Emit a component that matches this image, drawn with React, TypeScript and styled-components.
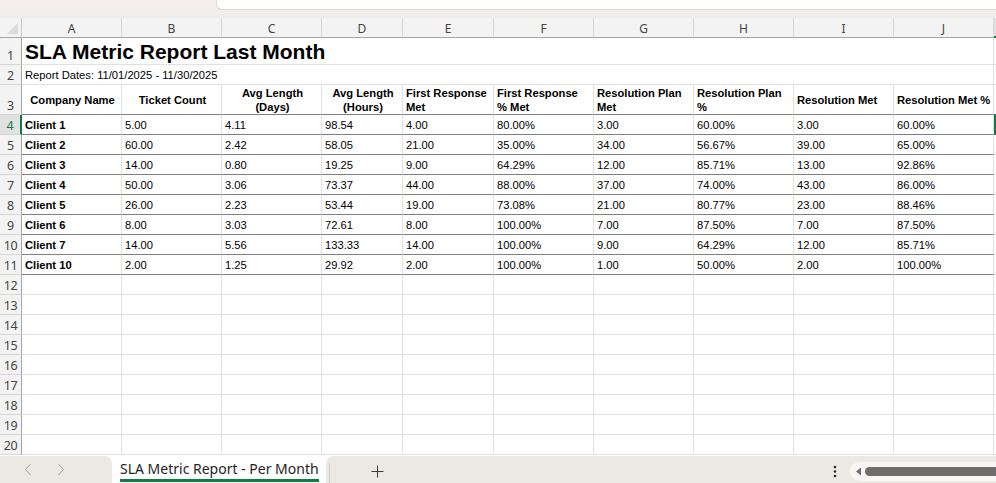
import React from "react";
import styled, { createGlobalStyle } from "styled-components";

const Global = createGlobalStyle`
  html, body { margin: 0; padding: 0; background: #ffffff; overflow: hidden; }
  body { font-family: "Liberation Sans", Arial, sans-serif; }
  * { box-sizing: border-box; }
`;

const Page = styled.div`
  width: 996px;
  height: 483px;
  display: flex;
  flex-direction: column;
  overflow: hidden;
  background: #ffffff;
`;

const TopStrip = styled.div`
  height: 18px;
  flex: none;
  display: flex;
  background: linear-gradient(#f6eeec, #efedec);
`;

const FormulaEdge = styled.div`
  margin-left: 216px;
  flex: 1;
  height: 10px;
  background: #ffffff;
  border: 1px solid #ded9d7;
  border-top: none;
  border-right: none;
  border-bottom-left-radius: 6px;
`;

const Sheet = styled.div`
  flex: none;
  display: grid;
  grid-template-columns: 22px 100px 100px 100px 81px 91px 100px 100px 100px 100px 100px 1fr;
  grid-template-rows: 20px 27px 20px 30px repeat(17, 20px);
`;

const Corner = styled.div`
  background: #f3f3f3;
  border-right: 1px solid #c8c8c8;
  border-bottom: 1px solid #a6a6a6;
  position: relative;
  &::after {
    content: "";
    position: absolute;
    right: 3px;
    bottom: 3px;
    width: 0;
    height: 0;
    border-left: 11px solid transparent;
    border-bottom: 11px solid #dcdcdc;
  }
`;

const ColHead = styled.div<{ $active?: boolean }>`
  background: ${(p) => (p.$active ? "#e1e1e1" : "#f3f3f3")};
  border-right: 1px solid #d6d6d6;
  border-bottom: ${(p) => (p.$active ? "2px solid #107c41" : "1px solid #a6a6a6")};
  display: flex;
  align-items: center;
  justify-content: center;
  font-family: "Noto Sans", "Liberation Sans", sans-serif;
  font-size: 12px;
  color: #444444;
  padding-top: 1px;
`;

const RowHead = styled.div<{ $active?: boolean }>`
  background: ${(p) => (p.$active ? "#e1e1e1" : "#f3f3f3")};
  border-right: ${(p) => (p.$active ? "2px solid #107c41" : "1px solid #a6a6a6")};
  border-bottom: 1px solid #d6d6d6;
  display: flex;
  align-items: flex-end;
  justify-content: center;
  font-family: "Noto Sans", "Liberation Sans", sans-serif;
  font-size: 12.5px;
  line-height: 17px;
  letter-spacing: -0.3px;
  color: ${(p) => (p.$active ? "#107c41" : "#444444")};
`;

const Cell = styled.div<{
  $dark?: boolean;
  $bold?: boolean;
  $align?: "left" | "center";
  $span?: number;
}>`
  grid-column: ${(p) => (p.$span ? `span ${p.$span}` : "auto")};
  border-right: 1px solid #e1e1e1;
  border-bottom: 1px solid ${(p) => (p.$dark ? "#7f7f7f" : "#e1e1e1")};
  display: flex;
  align-items: center;
  justify-content: ${(p) => (p.$align === "center" ? "center" : "flex-start")};
  text-align: ${(p) => (p.$align === "center" ? "center" : "left")};
  padding: 0 1px 0 3px;
  font-size: 11.2px;
  line-height: 14px;
  font-weight: ${(p) => (p.$bold ? 700 : 400)};
  color: #000000;
  white-space: nowrap;
  overflow: hidden;
  min-width: 0;
`;

const Title = styled(Cell)`
  font-size: 21px;
  font-weight: 700;
  line-height: 24px;
  padding-top: 2px;
`;

const ActiveCell = styled.div`
  border: 2px solid #107c41;
  border-right: none;
  margin-top: -1px;
  height: 21px;
`;

const TabBar = styled.div`
  flex: 1;
  display: flex;
  background: #ffffff;
  padding-top: 1px;
`;

const NavArea = styled.div`
  width: 112px;
  background: #ece8e3;
  border-top-right-radius: 8px;
  display: flex;
  align-items: center;
  padding-left: 22px;
  gap: 21px;
`;

const NavBtn = styled.span`
  width: 12px;
  height: 14px;
  display: flex;
  align-items: center;
  justify-content: center;
`;

const Tab = styled.div`
  width: 214px;
  display: flex;
  flex-direction: column;
  align-items: flex-start;
  padding: 3px 0 0 8px;
`;

const TabLabel = styled.span`
  font-family: "Noto Sans", "Liberation Sans", sans-serif;
  font-size: 14px;
  line-height: 19px;
  color: #242424;
  padding-bottom: 1px;
  border-bottom: 3px solid #107c41;
`;

const RightArea = styled.div`
  flex: 1;
  background: #ece8e3;
  border-top-left-radius: 8px;
  display: flex;
  align-items: center;
`;

const Divider = styled.div`
  width: 1px;
  height: 20px;
  background: #d2cec9;
  margin-left: 3px;
  margin-top: 6px;
`;

const AddBtn = styled.span`
  margin-left: 41px;
  display: flex;
  align-items: center;
  margin-top: 4px;
`;

const MoreBtn = styled.span`
  margin-left: 449px;
  display: flex;
  align-items: center;
  margin-top: 4px;
`;

const Scroll = styled.div`
  margin-left: 13px;
  margin-top: 4px;
  flex: 1;
  height: 19px;
  background: #f7f6f4;
  border-radius: 10px 0 0 10px;
  display: flex;
  align-items: center;
  padding-left: 5px;
  gap: 3px;
`;

const Thumb = styled.div`
  flex: 1;
  height: 9px;
  background: #6e6e6e;
  border-radius: 5px 0 0 5px;
`;

const cols = ["A", "B", "C", "D", "E", "F", "G", "H", "I", "J"];

type Hdr = { text: React.ReactNode; align: "left" | "center" };
const headers: Hdr[] = [
  { text: "Company Name", align: "center" },
  { text: "Ticket Count", align: "center" },
  { text: <>Avg Length<br />(Days)</>, align: "center" },
  { text: <>Avg Length<br />(Hours)</>, align: "center" },
  { text: <>First Response<br />Met</>, align: "left" },
  { text: <>First Response<br />% Met</>, align: "left" },
  { text: <>Resolution Plan<br />Met</>, align: "left" },
  { text: <>Resolution Plan<br />%</>, align: "left" },
  { text: "Resolution Met", align: "left" },
  { text: "Resolution Met %", align: "left" },
];

const data: string[][] = [
  ["Client 1", "5.00", "4.11", "98.54", "4.00", "80.00%", "3.00", "60.00%", "3.00", "60.00%"],
  ["Client 2", "60.00", "2.42", "58.05", "21.00", "35.00%", "34.00", "56.67%", "39.00", "65.00%"],
  ["Client 3", "14.00", "0.80", "19.25", "9.00", "64.29%", "12.00", "85.71%", "13.00", "92.86%"],
  ["Client 4", "50.00", "3.06", "73.37", "44.00", "88.00%", "37.00", "74.00%", "43.00", "86.00%"],
  ["Client 5", "26.00", "2.23", "53.44", "19.00", "73.08%", "21.00", "80.77%", "23.00", "88.46%"],
  ["Client 6", "8.00", "3.03", "72.61", "8.00", "100.00%", "7.00", "87.50%", "7.00", "87.50%"],
  ["Client 7", "14.00", "5.56", "133.33", "14.00", "100.00%", "9.00", "64.29%", "12.00", "85.71%"],
  ["Client 10", "2.00", "1.25", "29.92", "2.00", "100.00%", "1.00", "50.00%", "2.00", "100.00%"],
];

const Chevron = ({ dir }: { dir: "left" | "right" }) => (
  <svg width="8" height="13" viewBox="0 0 8 13">
    <path
      d={dir === "left" ? "M6.5 1 L1.5 6.5 L6.5 12" : "M1.5 1 L6.5 6.5 L1.5 12"}
      fill="none"
      stroke="#a19d99"
      strokeWidth="1"
    />
  </svg>
);

export default function App() {
  return (
    <Page>
      <Global />
      <TopStrip>
        <FormulaEdge />
      </TopStrip>
      <Sheet>
        <Corner />
        {cols.map((c) => (
          <ColHead key={c}>{c}</ColHead>
        ))}
        <ColHead $active />

        <RowHead>1</RowHead>
        <Title $span={10}>SLA Metric Report Last Month</Title>
        <Cell />

        <RowHead>2</RowHead>
        <Cell $span={10}>Report Dates: 11/01/2025 - 11/30/2025</Cell>
        <Cell />

        <RowHead>3</RowHead>
        {headers.map((h, i) => (
          <Cell key={i} $bold $dark $align={h.align}>
            <span>{h.text}</span>
          </Cell>
        ))}
        <Cell />

        {data.map((row, r) => (
          <React.Fragment key={r}>
            <RowHead $active={r === 0}>{r + 4}</RowHead>
            {row.map((v, i) => (
              <Cell key={i} $dark $bold={i === 0}>
                {v}
              </Cell>
            ))}
            {r === 0 ? <ActiveCell /> : <Cell />}
          </React.Fragment>
        ))}

        {Array.from({ length: 9 }, (_, k) => (
          <React.Fragment key={`e${k}`}>
            <RowHead>{k + 12}</RowHead>
            {Array.from({ length: 11 }, (_, i) => (
              <Cell key={i} />
            ))}
          </React.Fragment>
        ))}
      </Sheet>
      <TabBar>
        <NavArea>
          <NavBtn>
            <Chevron dir="left" />
          </NavBtn>
          <NavBtn>
            <Chevron dir="right" />
          </NavBtn>
        </NavArea>
        <Tab>
          <TabLabel>SLA Metric Report - Per Month</TabLabel>
        </Tab>
        <RightArea>
          <Divider />
          <AddBtn>
            <svg width="13" height="13" viewBox="0 0 13 13">
              <path d="M6.5 0.5 V12.5 M0.5 6.5 H12.5" stroke="#3a3a3a" strokeWidth="1" fill="none" />
            </svg>
          </AddBtn>
          <MoreBtn>
            <svg width="4" height="13" viewBox="0 0 4 13">
              <circle cx="2" cy="2" r="1.3" fill="#2a2a2a" />
              <circle cx="2" cy="6.5" r="1.3" fill="#2a2a2a" />
              <circle cx="2" cy="11" r="1.3" fill="#2a2a2a" />
            </svg>
          </MoreBtn>
          <Scroll>
            <svg width="7" height="9" viewBox="0 0 7 9">
              <path d="M6 0.5 L1 4.5 L6 8.5 Z" fill="#6e6e6e" />
            </svg>
            <Thumb />
          </Scroll>
        </RightArea>
      </TabBar>
    </Page>
  );
}
